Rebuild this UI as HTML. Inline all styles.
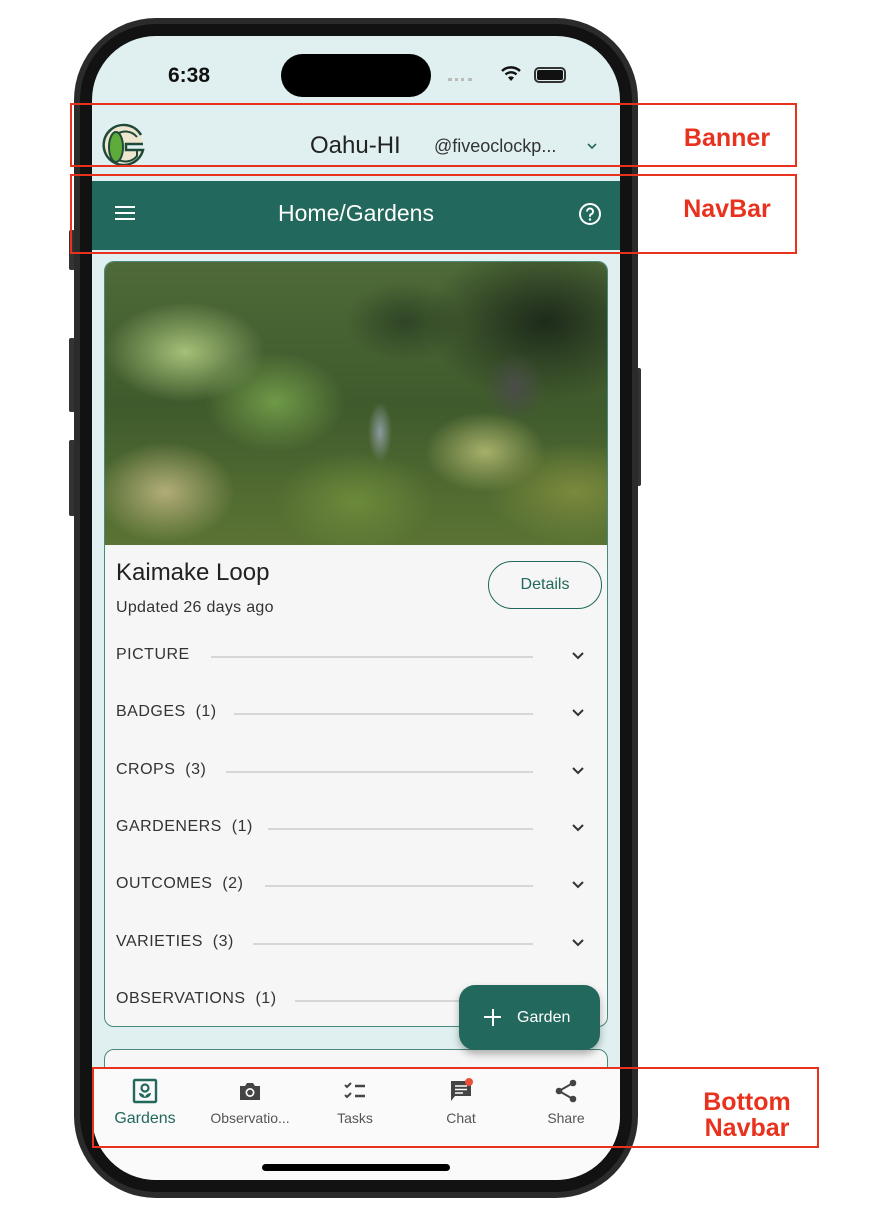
<!DOCTYPE html>
<html><head><meta charset="utf-8"><style>
*{margin:0;padding:0;box-sizing:border-box}
body{width:872px;height:1230px;background:#fff;position:relative;overflow:hidden;font-family:"Liberation Sans",sans-serif}
.abs{position:absolute}
.red{border:2px solid #e8321e}
.lbl{color:#e8321e;font-weight:bold;font-size:25px;text-align:center;line-height:26px}
.row{position:absolute;left:116px;width:480px;height:20px;font-size:16px;color:#333;letter-spacing:.5px}
.row .t{position:absolute;left:0;top:0;white-space:pre}
.row .ln{position:absolute;top:10px;height:2px;background:#d6d6d6}
.row svg{position:absolute;left:454px;top:2px}
.nv{position:absolute;top:1078px;width:104px;text-align:center;font-size:14px;color:#555}
.nv svg{display:block;margin:0 auto 6px}
</style></head><body>
<div class="abs" style="left:69px;top:230px;width:6px;height:40px;background:#333;border-radius:2px"></div>
<div class="abs" style="left:69px;top:338px;width:6px;height:74px;background:#333;border-radius:2px"></div>
<div class="abs" style="left:69px;top:440px;width:6px;height:76px;background:#333;border-radius:2px"></div>
<div class="abs" style="left:634px;top:368px;width:7px;height:118px;background:#333;border-radius:2px"></div>
<div class="abs" style="left:74px;top:18px;width:564px;height:1180px;background:#2b2b2b;border-radius:82px"></div>
<div class="abs" style="left:80px;top:24px;width:552px;height:1168px;background:#121212;border-radius:76px"></div>
<div class="abs" style="left:92px;top:36px;width:528px;height:1144px;background:#e0f0f0;border-radius:64px;overflow:hidden">
  <div class="abs" style="left:189px;top:18px;width:150px;height:43px;background:#000;border-radius:22px"></div>
  <div class="abs" style="left:76px;top:28px;font-size:21px;font-weight:bold;color:#111">6:38</div>
  <div class="abs" style="left:356px;top:42px;width:24px;height:3px;border-top:3px dotted #bbb"></div>
  <svg class="abs" style="left:408px;top:30px" width="22" height="16" viewBox="0 0 22 16"><path d="M11 15 L8 11.5 A4.5 4.5 0 0 1 14 11.5Z" fill="#111"/><path d="M5.5 8.5 A8 8 0 0 1 16.5 8.5" stroke="#111" stroke-width="2.4" fill="none"/><path d="M2 5 A13 13 0 0 1 20 5" stroke="#111" stroke-width="2.4" fill="none"/></svg>
  <div class="abs" style="left:442px;top:31px;width:32px;height:16px;border:2px solid #333;border-radius:5px;padding:1px"><div style="width:100%;height:100%;background:#111;border-radius:2px"></div></div>
  <svg class="abs" style="left:7px;top:86px" width="48" height="48" viewBox="0 0 48 48"><path d="M42 13 A20 20 0 1 0 44 28 L27 28 L27 22 L44 22" fill="#efe6cf" stroke="#1f4a3a" stroke-width="2.5"/><path d="M38 15 A15 15 0 1 0 38 34 L38 28" fill="none" stroke="#1f4a3a" stroke-width="2"/><ellipse cx="17" cy="25" rx="7" ry="15" fill="#5eaa3a" stroke="#1f4a3a" stroke-width="2"/></svg>
  <div class="abs" style="left:218px;top:96px;font-size:24px;color:#222">Oahu-HI</div>
  <div class="abs" style="left:342px;top:100px;font-size:18px;color:#333">@fiveoclockp...</div>
  <svg class="abs" style="left:494px;top:106px" width="12" height="8" viewBox="0 0 12 8"><path d="M2 2l4 4 4-4" stroke="#22685c" stroke-width="1.6" fill="none"/></svg>
  <div class="abs" style="left:0;top:145px;width:528px;height:69px;background:#22685c"></div>
  <div class="abs" style="left:23px;top:170px;width:20px;height:2px;background:#fff;box-shadow:0 6px 0 #fff,0 12px 0 #fff"></div>
  <div class="abs" style="left:0;top:164px;width:528px;text-align:center;font-size:23px;color:#fff">Home/Gardens</div>
  <svg class="abs" style="left:486px;top:166px" width="24" height="24" viewBox="0 0 24 24"><circle cx="12" cy="12" r="10" stroke="#fff" stroke-width="2" fill="none"/><path d="M9 9.5a3 3 0 1 1 4 2.8c-.8.4-1 1-1 2v.5" stroke="#fff" stroke-width="2" fill="none"/><circle cx="12" cy="17.5" r="1.2" fill="#fff"/></svg>
  <div class="abs" style="left:12px;top:225px;width:504px;height:766px;background:#f6f6f6;border:1.5px solid #4a8a7c;border-radius:10px;overflow:hidden">
    <div class="abs" style="left:0;top:0;width:504px;height:283px;background:
      radial-gradient(ellipse 30px 35px at 410px 125px,#4a4c48 0,transparent 100%),
      radial-gradient(ellipse 12px 30px at 275px 170px,#8c9aa0 0,transparent 100%),
      radial-gradient(ellipse 90px 50px at 470px 230px,#7b8a3c 0,transparent 100%),
      radial-gradient(ellipse 60px 40px at 380px 190px,#a7b06a 0,transparent 100%),
      radial-gradient(ellipse 80px 50px at 80px 90px,#a5c078 0,transparent 100%),
      radial-gradient(ellipse 70px 50px at 170px 140px,#6f9a48 0,transparent 100%),
      radial-gradient(ellipse 70px 50px at 60px 230px,#b2ad78 0,transparent 100%),
      radial-gradient(ellipse 80px 50px at 250px 240px,#6c8a3a 0,transparent 100%),
      radial-gradient(ellipse 120px 80px at 440px 60px,#1d2a1a 0,transparent 100%),
      radial-gradient(ellipse 60px 40px at 300px 60px,#2f4426 0,transparent 100%),
      linear-gradient(180deg,#4f6a38 0%,#3f5a2c 50%,#5b7434 100%)"></div>
  </div>
  <div class="abs" style="left:24px;top:523px;font-size:24px;color:#222">Kaimake Loop</div>
  <div class="abs" style="left:24px;top:563px;font-size:16px;color:#333;letter-spacing:.3px">Updated 26 days ago</div>
  <div class="abs" style="left:396px;top:525px;width:114px;height:48px;border:1.5px solid #22685c;border-radius:24px;text-align:center;line-height:45px;font-size:16px;color:#22685c">Details</div>
  <div class="abs" style="left:12px;top:1013px;width:504px;height:100px;background:#f6f6f6;border:1.5px solid #4a8a7c;border-radius:10px"></div>
</div>
<div class="row" style="top:646px"><span class="t">PICTURE</span><div class="ln" style="left:95px;width:322px"></div><svg width="16" height="16" viewBox="0 0 16 16"><path d="M3 5l5 5 5-5" stroke="#333" stroke-width="2" fill="none"/></svg></div>
<div class="row" style="top:703px"><span class="t">BADGES  (1)</span><div class="ln" style="left:118px;width:299px"></div><svg width="16" height="16" viewBox="0 0 16 16"><path d="M3 5l5 5 5-5" stroke="#333" stroke-width="2" fill="none"/></svg></div>
<div class="row" style="top:761px"><span class="t">CROPS  (3)</span><div class="ln" style="left:110px;width:307px"></div><svg width="16" height="16" viewBox="0 0 16 16"><path d="M3 5l5 5 5-5" stroke="#333" stroke-width="2" fill="none"/></svg></div>
<div class="row" style="top:818px"><span class="t">GARDENERS  (1)</span><div class="ln" style="left:152px;width:265px"></div><svg width="16" height="16" viewBox="0 0 16 16"><path d="M3 5l5 5 5-5" stroke="#333" stroke-width="2" fill="none"/></svg></div>
<div class="row" style="top:875px"><span class="t">OUTCOMES  (2)</span><div class="ln" style="left:149px;width:268px"></div><svg width="16" height="16" viewBox="0 0 16 16"><path d="M3 5l5 5 5-5" stroke="#333" stroke-width="2" fill="none"/></svg></div>
<div class="row" style="top:933px"><span class="t">VARIETIES  (3)</span><div class="ln" style="left:137px;width:280px"></div><svg width="16" height="16" viewBox="0 0 16 16"><path d="M3 5l5 5 5-5" stroke="#333" stroke-width="2" fill="none"/></svg></div>
<div class="row" style="top:990px"><span class="t">OBSERVATIONS  (1)</span><div class="ln" style="left:179px;width:238px"></div></div>
<div class="abs" style="left:459px;top:985px;width:141px;height:65px;background:#22685c;border-radius:16px;box-shadow:0 4px 8px rgba(0,0,0,.3);color:#fff;font-size:16px;line-height:65px;padding-left:58px">Garden</div>
<div class="abs" style="left:484px;top:1016px;width:17px;height:2px;background:#fff"></div>
<div class="abs" style="left:491.5px;top:1009px;width:2px;height:17px;background:#fff"></div>
<div class="abs" style="left:92px;top:1068px;width:528px;height:112px;background:#fafafa;border-radius:0 0 64px 64px"></div>
<div class="abs" style="left:262px;top:1164px;width:188px;height:7px;background:#000;border-radius:4px"></div>
<div class="nv" style="left:93px;color:#22685c;font-size:16px"><svg width="26" height="26" viewBox="0 0 26 26"><rect x="2" y="2" width="22" height="22" rx="1" stroke="#22685c" stroke-width="2.4" fill="none"/><circle cx="13" cy="10" r="3.5" stroke="#22685c" stroke-width="2.2" fill="none"/><path d="M7 15c0 3 3 5 6 5s6-2 6-5c-3 0-6 2-6 5 0-3-3-5-6-5z" fill="#22685c"/></svg>Gardens</div>
<div class="nv" style="left:198px"><svg width="26" height="26" viewBox="0 0 26 26"><path d="M3 8h5l2-3h6l2 3h5v14H3z" fill="#444"/><circle cx="13" cy="14.5" r="4.5" fill="#fafafa"/><circle cx="13" cy="14.5" r="2.8" fill="#444"/></svg>Observatio...</div>
<div class="nv" style="left:303px"><svg width="26" height="26" viewBox="0 0 26 26"><path d="M3 7l2 2 4-4M3 17l2 2 4-4" stroke="#444" stroke-width="2" fill="none"/><path d="M13 8h10M13 18h10" stroke="#444" stroke-width="2.4"/></svg>Tasks</div>
<div class="nv" style="left:409px"><svg width="26" height="26" viewBox="0 0 26 26"><path d="M3 3h20v15H7l-4 5z" fill="#444"/><path d="M7 8h12M7 11.5h12M7 15h8" stroke="#fff" stroke-width="1.6"/><circle cx="21" cy="4" r="4" fill="#e8503a"/></svg>Chat</div>
<div class="nv" style="left:514px"><svg width="26" height="26" viewBox="0 0 26 26"><circle cx="20" cy="5" r="3.3" fill="#444"/><circle cx="6" cy="13" r="3.3" fill="#444"/><circle cx="20" cy="21" r="3.3" fill="#444"/><path d="M20 5L6 13l14 8" stroke="#444" stroke-width="2" fill="none"/></svg>Share</div>
<div class="abs red" style="left:70px;top:103px;width:727px;height:64px"></div>
<div class="abs red" style="left:70px;top:174px;width:727px;height:80px"></div>
<div class="abs red" style="left:92px;top:1067px;width:727px;height:81px"></div>
<div class="abs lbl" style="left:660px;top:125px;width:134px">Banner</div>
<div class="abs lbl" style="left:660px;top:196px;width:134px">NavBar</div>
<div class="abs lbl" style="left:680px;top:1089px;width:134px">Bottom<br>Navbar</div>
</body></html>
